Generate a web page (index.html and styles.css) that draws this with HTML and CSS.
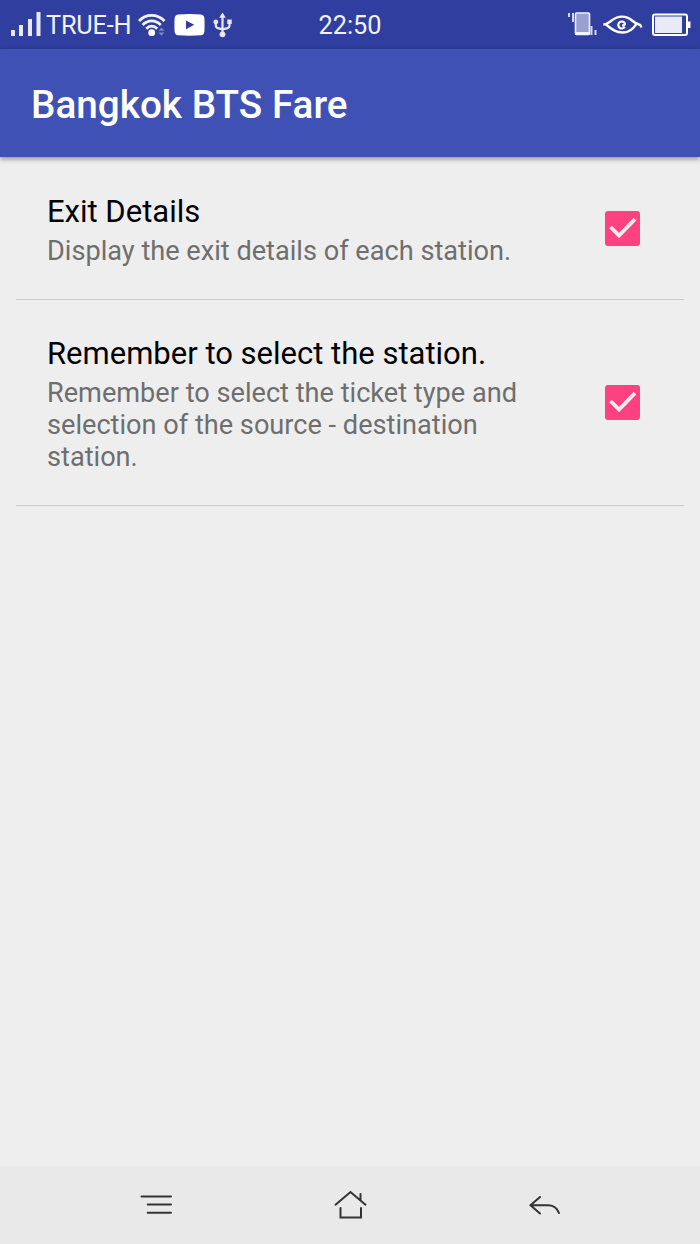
FILE: index.html
```html
<!DOCTYPE html>
<html lang="en">
<head>
  <meta charset="UTF-8" />
  <meta name="viewport" content="width=device-width, initial-scale=1.0" />
  <title>Bangkok BTS Fare</title>
  <link rel="stylesheet" href="styles.css">
</head>
<body>
  <div class="status-bar">
    <div class="status-left">
      <svg class="signal" width="30" height="26" viewBox="0 0 30 26" fill="#e9eaf6">
        <rect x="0" y="19" width="4" height="6" />
        <rect x="8" y="14" width="4" height="11" />
        <rect x="17" y="8" width="4" height="17" />
        <rect x="25.5" y="1" width="4" height="24" />
      </svg>
      <span class="carrier">TRUE-H</span>
      <svg class="wifi" width="28" height="24" viewBox="0 0 28 24" fill="none" stroke="#f1f2fa" stroke-width="2.8">
        <path d="M1 8C8 .6 19 .6 26.5 8" />
        <path d="M4.600 12C10 6.500 17.500 6.500 22.800 12" />
        <path d="M8.300 15.800C11.500 12.300 16 12.300 19.200 15.800" />
        <circle cx="13.700" cy="19.700" r="3.400" fill="#fff" stroke="none" />
        <path d="M20.500 17.800l3-3.200 3 3.200zM20.500 19.500h6l-3 3.200z" fill="#7e88c8" stroke="none" />
      </svg>
      <svg class="video" width="31" height="22" viewBox="0 0 31 22">
        <path d="M4 .6Q15.500-.4 27 .6Q30.200 1 30.400 4.500Q30.800 11 30.400 17.500Q30 21 27 21.300Q15.500 22.200 4 21.300Q1 21 .6 17.500Q.2 11 .6 4.500Q1 1 4 .6z" fill="#fff" />
        <path d="M12 6.500l8.200 4.300-8.200 4.400z" fill="#303f9f" />
      </svg>
      <svg class="usb" width="20" height="26" viewBox="0 0 20 26" fill="none" stroke="#e6e8f5" stroke-width="2.2">
        <path d="M9.500 4v18M2.800 10v3.500q0 2 2 2.600l4.700 1.300M16.500 9v4.500q0 2-2 2.600l-5 1.300" />
        <path d="M9.500 .5l3.300 5.200H6.200zM14.300 7.500h4.400v4.600h-4.400z" fill="#e6e8f5" stroke="none" />
        <circle cx="2.800" cy="10" r="2.400" fill="#e6e8f5" stroke="none" />
        <circle cx="9.500" cy="22.300" r="2.900" fill="#e6e8f5" stroke="none" />
      </svg>
    </div>
    <div class="clock">22:50</div>
    <div class="status-right">
      <svg class="vibrate" width="29" height="24" viewBox="0 0 29 24">
        <path d="M1 1v4M5 1v9M23.500 14v9M27.500 18v5" stroke="#d6d9ef" stroke-width="2" />
        <rect x="7.500" y="1" width="14" height="21.500" rx="1" fill="#98a0d0" stroke="#f1f2fa" stroke-width="1.600" />
        <path d="M7 21.500h15" stroke="#f1f2fa" stroke-width="3" />
      </svg>
      <svg class="eye" width="40" height="20" viewBox="0 0 40 20" fill="none" stroke="#fff" stroke-width="2.400">
        <path d="M.3 9.500C4 9.500 5.500 8 8 6C15 .2 23 .2 29 5.500C32 8.200 35 9 36.500 9.600Q37.800 10.200 38.500 12.500" />
        <path d="M3 9.500C9 14.500 13 17.500 19.500 17.500C26 17.500 30.500 13.500 33.500 8.800" />
        <path d="M21.800 11.800a3.500 3.500 0 1 1 .2-3.200q0 2-3 1.800" stroke-width="2.200" />
      </svg>
      <svg class="battery" width="40" height="24" viewBox="0 0 40 24">
        <rect x="1" y="1.500" width="34" height="20.500" rx="2" fill="none" stroke="#fff" stroke-width="2" />
        <rect x="3" y="3.500" width="27" height="16.500" fill="#e8eaf5" />
        <path d="M36 8.500h2.500v6.500H36z" fill="#fff" />
      </svg>
    </div>
  </div>

  <header class="app-bar">
    <h1>Bangkok BTS Fare</h1>
  </header>

  <main class="settings">
    <div class="setting">
      <div class="setting-text">
        <h2>Exit Details</h2>
        <p>Display the exit details of each station.</p>
      </div>
      <div class="checkbox">
        <svg width="35" height="35" viewBox="0 0 35 35">
          <path d="M5.500 16l8.500 8.500L30 8.200" fill="none" stroke="#eee" stroke-width="3.800" />
        </svg>
      </div>
    </div>
    <div class="setting">
      <div class="setting-text">
        <h2>Remember to select the station.</h2>
        <p>Remember to select the ticket type and selection of the source - destination station.</p>
      </div>
      <div class="checkbox">
        <svg width="35" height="35" viewBox="0 0 35 35">
          <path d="M5.500 16l8.500 8.500L30 8.200" fill="none" stroke="#eee" stroke-width="3.800" />
        </svg>
      </div>
    </div>
  </main>

  <nav class="nav-bar">
    <svg width="34" height="32" viewBox="0 0 34 32">
      <path d="M2.500 7.500H32M8.700 15.500H32M8.700 23.700H32" />
    </svg>
    <svg width="34" height="32" viewBox="0 0 34 32">
      <path d="M2.500 15.700L17.500 3l15 12.700M27.500 11V5M7.500 19v9.500H28V19" />
    </svg>
    <svg width="34" height="32" viewBox="0 0 34 32">
      <path d="M13 8L3.500 16.200l9.500 8.300M3.500 16.200h18Q29.500 16.700 32 24" />
    </svg>
  </nav>
</body>
</html>
```

FILE: styles.css
```css
:root {
  --primary: #3f51b5;
  --primary-dark: #303f9f;
  --accent: #ff4081;
  --bg: #eeeeee;
}

body {
  margin: 0;
  height: 1244px;
  display: flex;
  flex-direction: column;
  overflow: hidden;
  font-family: Roboto, sans-serif;
  background: var(--bg);
}

svg {
  display: block;
  flex-shrink: 0;
}

h1, h2, p {
  margin: 0;
}

.status-bar {
  height: 49px;
  display: grid;
  grid-template-columns: 1fr auto 1fr;
  align-items: center;
  background: var(--primary-dark);
  color: #f1f2fa;
  font-size: 25.3px;
}

.carrier,
.clock {
  padding-top: 2px;
}

.status-left,
.status-right {
  display: flex;
  align-items: center;
}

.status-left {
  padding-left: 11px;
}

.signal {
  margin-top: -2px;
}

.carrier {
  margin-left: 5px;
  width: 86px;
  letter-spacing: -0.2px;
  white-space: nowrap;
}

.wifi {
  margin-left: 6px;
}

.video {
  margin-left: 8px;
}

.usb {
  margin-left: 8px;
}

.status-right {
  justify-content: flex-end;
  padding-right: 8px;
}

.vibrate {
  margin-top: -2px;
}

.eye {
  margin-left: 6px;
}

.battery {
  margin-left: 9px;
}

.app-bar {
  height: 108px;
  display: flex;
  align-items: center;
  padding: 2px 31px 0;
  box-sizing: border-box;
  background: var(--primary);
  color: white;
  box-shadow: 0 2px 5px rgba(0, 0, 0, 0.4);
}

.app-bar h1 {
  font-size: 38.7px;
  font-weight: 500;
}

.settings {
  flex: 1;
  padding: 1px 16px 0;
}

.setting {
  display: flex;
  align-items: center;
  justify-content: space-between;
  padding: 0 44px 0 31px;
  border-bottom: 1px solid #cccccc;
}

.setting-text {
  width: 500px;
  padding: 36px 0 32px;
}

.setting h2 {
  margin-bottom: 5px;
  font-size: 31px;
  line-height: 36px;
  font-weight: 400;
}

.setting p {
  font-size: 27.15px;
  line-height: 32px;
  color: #6e6e6e;
}

.checkbox {
  width: 35px;
  height: 35px;
  border-radius: 3px;
  background: var(--accent);
}

.nav-bar {
  height: 78px;
  display: flex;
  align-items: center;
  justify-content: space-between;
  padding: 0 139px;
  box-sizing: border-box;
  background: #e9e9e9;
}

.nav-bar svg {
  fill: none;
  stroke: #333;
  stroke-width: 2;
  stroke-linecap: round;
}
```
